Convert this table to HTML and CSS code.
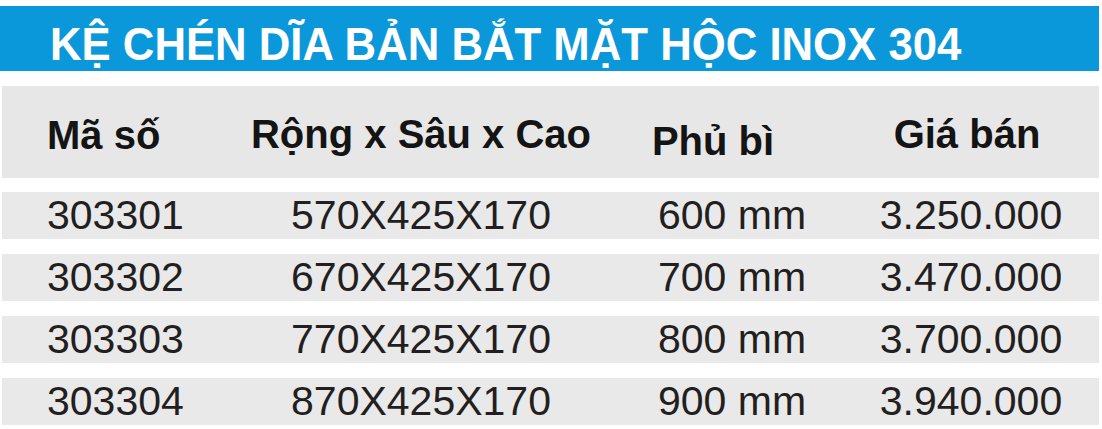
FILE: index.html
```html
<!DOCTYPE html>
<html lang="vi">
<head>
<meta charset="utf-8">
<title>Kệ chén dĩa</title>
<link rel="stylesheet" href="styles.css">
</head>
<body>
<div class="page">
  <div class="title-bar"><span class="title">KỆ CHÉN DĨA BẢN BẮT MẶT HỘC INOX 304</span></div>
  <div class="table">
    <div class="row head">
      <div class="cell c1">Mã số</div>
      <div class="cell c2">Rộng x Sâu x Cao</div>
      <div class="cell c3 h3">Phủ bì</div>
      <div class="cell c4 h4">Giá bán</div>
    </div>
    <div class="row">
      <div class="cell c1">303301</div>
      <div class="cell c2">570X425X170</div>
      <div class="cell c3">600 mm</div>
      <div class="cell c4">3.250.000</div>
    </div>
    <div class="row">
      <div class="cell c1">303302</div>
      <div class="cell c2">670X425X170</div>
      <div class="cell c3">700 mm</div>
      <div class="cell c4">3.470.000</div>
    </div>
    <div class="row">
      <div class="cell c1">303303</div>
      <div class="cell c2">770X425X170</div>
      <div class="cell c3">800 mm</div>
      <div class="cell c4">3.700.000</div>
    </div>
    <div class="row">
      <div class="cell c1">303304</div>
      <div class="cell c2">870X425X170</div>
      <div class="cell c3">900 mm</div>
      <div class="cell c4">3.940.000</div>
    </div>
  </div>
</div>
</body>
</html>
```

FILE: styles.css
```css
html, body {
  margin: 0;
  padding: 0;
  background: #ffffff;
}

.page {
  width: 1102px;
  height: 429px;
  padding-top: 6px;
  box-sizing: border-box;
  font-family: "Liberation Sans", Arial, sans-serif;
}

.title-bar {
  width: 1099px;
  height: 65px;
  box-sizing: border-box;
  padding-top: 11px;
  padding-left: 50px;
  background: #0b98da;
  white-space: nowrap;
  overflow: hidden;
}

.title {
  display: inline-block;
  font-size: 46px;
  line-height: 54px;
  font-weight: bold;
  color: #ffffff;
  transform: scaleX(0.95);
  transform-origin: left center;
}

.table {
  margin-top: 15px;
  margin-left: 2px;
  width: 1097px;
  display: flex;
  flex-direction: column;
  gap: 15px;
}

.row {
  display: grid;
  grid-template-columns: 238px 362px 260px 212px 25px;
  height: 47px;
  background: #e9e9e9;
  font-size: 41px;
  line-height: 47px;
  color: #231f20;
  white-space: nowrap;
}

.row.head {
  height: 92px;
  margin-bottom: -1px;
  background: #e7e7e7;
  font-size: 40px;
  line-height: 46px;
  font-weight: bold;
  color: #141414;
}

.cell {
  text-align: center;
}

.c1 {
  text-align: left;
  padding-left: 45px;
}

.head .cell {
  padding-top: 25px;
}

.head .c1 {
  padding-top: 26px;
}

.head .h3 {
  padding-top: 32px;
  padding-right: 38px;
}

.c4 {
  padding-left: 6px;
}

.head .h4 {
  padding-left: 0;
  padding-right: 2px;
}
```
